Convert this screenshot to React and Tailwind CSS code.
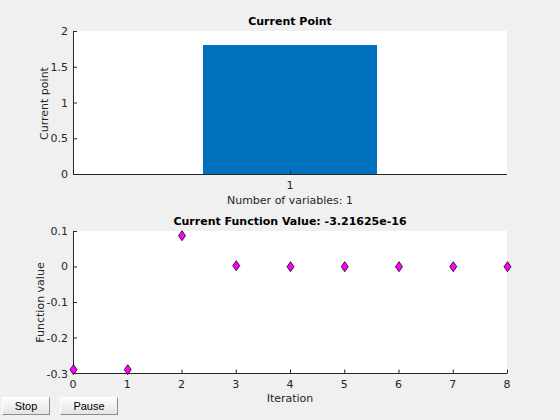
import React from 'react';

const AXIS = '#262626';

function Diamond({ x, y }) {
  return (
    <path
      d={`M${x} ${y - 5}L${x + 3.5} ${y}L${x} ${y + 5}L${x - 3.5} ${y}Z`}
      fill="#ff00ff"
      stroke="#000"
      strokeWidth="0.8"
    />
  );
}

function YAxis({ label, ticks }) {
  return (
    <div className="w-[73px] shrink-0 flex justify-end items-center">
      <div className="w-[13px] flex justify-center items-center">
        <span className="-rotate-90 whitespace-nowrap">{label}</span>
      </div>
      <div className="h-[156px] flex flex-col justify-between items-end pr-[5px]">
        {ticks.map((t) => (
          <span key={t} className="h-[13px]">{t}</span>
        ))}
      </div>
    </div>
  );
}

function PointPlot() {
  const yt = [0.5, 36.25, 72, 107.75, 143.5];
  return (
    <svg width="434" height="144" className="block overflow-visible">
      <rect x="0" y="0" width="434" height="143" fill="#fff" />
      <rect x="130" y="14" width="174" height="129.5" fill="#0072bd" />
      <path d="M0.5 0V144M0 143.5H434" stroke={AXIS} fill="none" />
      {yt.map((y) => (
        <path key={y} d={`M0 ${y}H4`} stroke={AXIS} />
      ))}
      <path d="M217.5 143.5V139.5" stroke={AXIS} />
    </svg>
  );
}

function ValuePlot() {
  const yt = [0.5, 36, 71.5, 107, 142.5];
  const pts = [138.7, 138.7, 4.7, 34.7, 35.7, 35.7, 35.7, 35.7, 35.7];
  return (
    <svg width="434" height="143" className="block overflow-visible">
      <rect x="0" y="0" width="434" height="142" fill="#fff" />
      <path d="M0.5 0V143M0 142.5H434" stroke={AXIS} fill="none" />
      {yt.map((y) => (
        <path key={y} d={`M0 ${y}H4`} stroke={AXIS} />
      ))}
      {pts.map((_, i) => (
        <path key={i} d={`M${i * 54.25 + 0.5} 142.5V138.5`} stroke={AXIS} />
      ))}
      {pts.map((y, i) => (
        <Diamond key={i} x={i * 54.25 + 0.5} y={y} />
      ))}
    </svg>
  );
}

function Button({ children, className }) {
  return (
    <button
      className={`h-[18px] flex items-center justify-center bg-gradient-to-b from-[#fdfdfd] to-[#e4e4e4] border border-t-[#ffffff] border-l-[#ffffff] border-r-[#8c8c8c] border-b-[#8c8c8c] text-black text-[11px] font-['Liberation_Sans',sans-serif] ${className}`}
    >
      {children}
    </button>
  );
}

export default function App() {
  return (
    <div className="relative w-[560px] h-[420px] overflow-hidden bg-[#f0f0f0] text-[11px] leading-[13px] text-[#262626] font-['DejaVu_Sans',sans-serif]">
      {/* Current Point */}
      <div className="pt-[15px]">
        <div className="ml-[73px] w-[434px] h-[13px] text-center font-bold text-black">Current Point</div>
        <div className="mt-[3px] flex h-[144px]">
          <YAxis label="Current point" ticks={['2', '1.5', '1', '0.5', '0']} />
          <PointPlot />
        </div>
        <div className="mt-[4px] ml-[73px] w-[434px] h-[13px] text-center">1</div>
        <div className="mt-[2px] ml-[73px] w-[434px] h-[13px] text-center">Number of variables: 1</div>
      </div>

      {/* Current Function Value */}
      <div className="mt-[8px]">
        <div className="ml-[73px] w-[434px] h-[13px] text-center font-bold text-black">
          Current Function Value: -3.21625e-16
        </div>
        <div className="mt-[3px] flex h-[143px]">
          <YAxis label="Function value" ticks={['0.1', '0', '-0.1', '-0.2', '-0.3']} />
          <ValuePlot />
        </div>
        <div className="mt-[4px] ml-[63px] w-[454px] h-[13px] flex justify-between">
          {['0', '1', '2', '3', '4', '5', '6', '7', '8'].map((t) => (
            <span key={t} className="w-[20px] text-center">{t}</span>
          ))}
        </div>
        <div className="mt-[1px] ml-[73px] w-[434px] h-[13px] text-center">Iteration</div>
      </div>

      <div className="absolute left-[2px] top-[397px] flex gap-[10px]">
        <Button className="w-[48px]">Stop</Button>
        <Button className="w-[58px]">Pause</Button>
      </div>
    </div>
  );
}
